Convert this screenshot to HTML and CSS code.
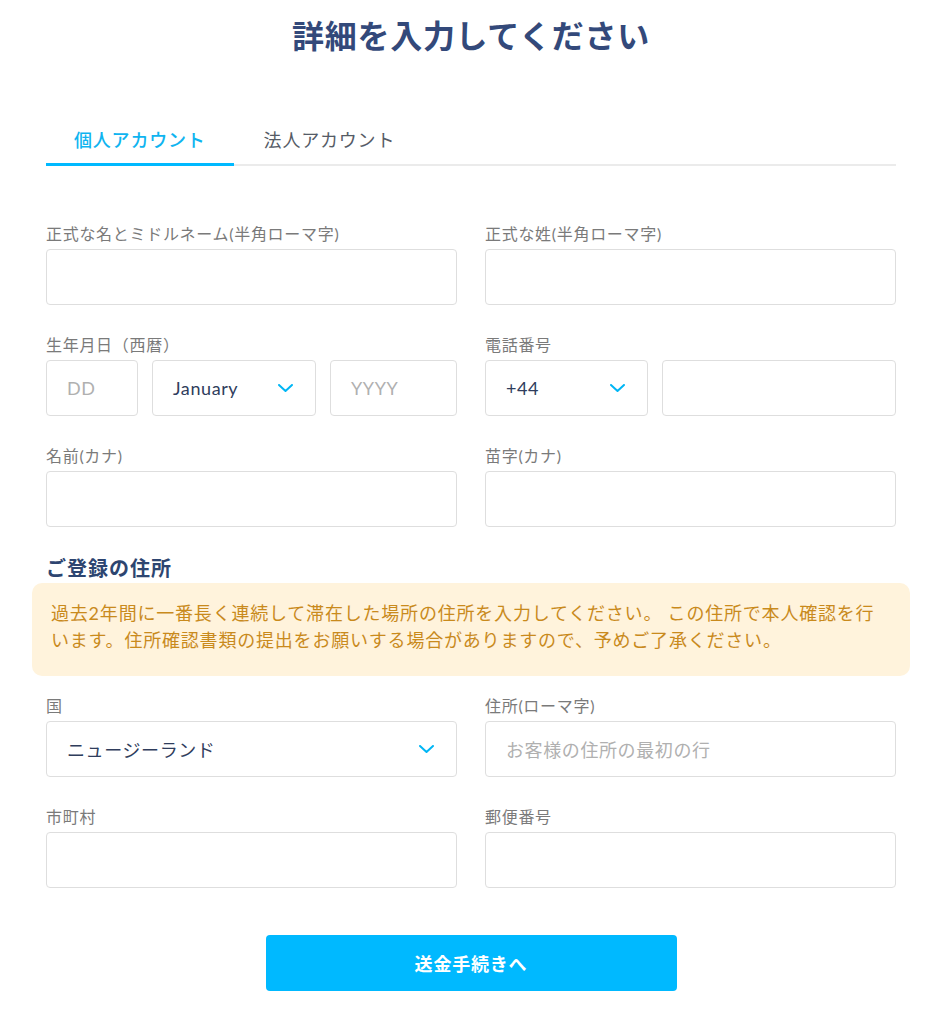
FILE: index.html
```html
<!DOCTYPE html>
<html lang="ja">
<head>
<meta charset="utf-8">
<title>詳細を入力してください</title>
<link rel="stylesheet" href="styles.css">
</head>
<body>
<main class="page">
  <h1 class="title">詳細を入力してください</h1>

  <nav class="tabs">
    <div class="tab tab-active">個人アカウント</div>
    <div class="tab">法人アカウント</div>
  </nav>

  <section class="grid first-grid">
    <div class="field">
      <label class="label">正式な名とミドルネーム(半角ローマ字)</label>
      <div class="control"></div>
    </div>
    <div class="field">
      <label class="label">正式な姓(半角ローマ字)</label>
      <div class="control"></div>
    </div>

    <div class="field">
      <label class="label">生年月日（西暦）</label>
      <div class="dob">
        <div class="control placeholder">DD</div>
        <div class="control select"><span class="value">January</span><svg class="chev" width="15" height="8" viewBox="0 0 15 8"><path d="M1 1l6.5 6L14 1" fill="none" stroke="#00b6f5" stroke-width="2" stroke-linecap="round" stroke-linejoin="round"/></svg></div>
        <div class="control placeholder">YYYY</div>
      </div>
    </div>
    <div class="field">
      <label class="label">電話番号</label>
      <div class="phone">
        <div class="control select"><span class="value">+44</span><svg class="chev" width="15" height="8" viewBox="0 0 15 8"><path d="M1 1l6.5 6L14 1" fill="none" stroke="#00b6f5" stroke-width="2" stroke-linecap="round" stroke-linejoin="round"/></svg></div>
        <div class="control"></div>
      </div>
    </div>

    <div class="field">
      <label class="label">名前(カナ)</label>
      <div class="control"></div>
    </div>
    <div class="field">
      <label class="label">苗字(カナ)</label>
      <div class="control"></div>
    </div>
  </section>

  <h2 class="section-title">ご登録の住所</h2>
  <div class="notice">過去2年間に一番長く連続して滞在した場所の住所を入力してください。 この住所で本人確認を行います。住所確認書類の提出をお願いする場合がありますので、予めご了承ください。</div>

  <section class="grid">
    <div class="field">
      <label class="label">国</label>
      <div class="control select"><span class="value">ニュージーランド</span><svg class="chev" width="15" height="8" viewBox="0 0 15 8"><path d="M1 1l6.5 6L14 1" fill="none" stroke="#00b6f5" stroke-width="2" stroke-linecap="round" stroke-linejoin="round"/></svg></div>
    </div>
    <div class="field">
      <label class="label">住所(ローマ字)</label>
      <div class="control placeholder">お客様の住所の最初の行</div>
    </div>
    <div class="field">
      <label class="label">市町村</label>
      <div class="control"></div>
    </div>
    <div class="field">
      <label class="label">郵便番号</label>
      <div class="control"></div>
    </div>
  </section>

  <div class="actions">
    <button class="submit" type="button">送金手続きへ</button>
  </div>
</main>
</body>
</html>
```

FILE: styles.css
```css
* { box-sizing: border-box; }

body {
  margin: 0;
  background: #ffffff;
  font-family: "Lato", "Noto Sans CJK JP", sans-serif;
  color: #2f3d5c;
}

.page {
  width: 850px;
  margin: 0 47px 0 46px;
  padding-top: 16px;
}

.title {
  margin: 0;
  text-align: center;
  font-size: 32px;
  line-height: 40px;
  font-weight: 700;
  letter-spacing: 0.7px;
  color: #33497a;
}

.tabs {
  display: flex;
  margin-top: 72px;
  box-shadow: inset 0 -2px 0 #ebebeb;
}

.tab {
  padding: 0 28px 11px;
  font-size: 18px;
  line-height: 24px;
  letter-spacing: 0.8px;
  color: #555b66;
  border-bottom: 3px solid transparent;
}

.tab + .tab {
  padding-left: 30px;
}

.tab-active {
  color: #0fb4f0;
  font-weight: 500;
  border-bottom-color: #00b9ff;
}

.grid {
  display: grid;
  grid-template-columns: 411px 411px;
  column-gap: 28px;
  row-gap: 29px;
}

.first-grid {
  margin-top: 57px;
}

.field {
  display: flex;
  flex-direction: column;
}

.label {
  font-size: 16px;
  line-height: 22px;
  margin-bottom: 4px;
  letter-spacing: 0.7px;
  color: #7a7a7a;
}

.control {
  height: 56px;
  border: 1px solid #dedede;
  border-radius: 4px;
  background: #fff;
  padding: 0 20px;
  display: flex;
  align-items: center;
  font-size: 18px;
  letter-spacing: 0.6px;
  color: #2f3d5c;
}

.placeholder {
  color: #b0b0b0;
}

.select {
  justify-content: space-between;
  padding-right: 22px;
}

.chev {
  flex: none;
}

.dob {
  display: grid;
  grid-template-columns: 92px 164px 127px;
  column-gap: 14px;
}

.phone {
  display: grid;
  grid-template-columns: 163px 234px;
  column-gap: 14px;
}

.section-title {
  margin: 28px 0 2px;
  font-size: 20px;
  line-height: 26px;
  font-weight: 700;
  letter-spacing: 1px;
  color: #2d4570;
}

.notice {
  margin: 0 -14px 19px;
  padding: 17px 19px 22px;
  background: #fff3dc;
  border-radius: 10px;
  font-size: 18px;
  line-height: 27px;
  letter-spacing: 0.8px;
  color: #c98a1c;
}

.actions {
  display: flex;
  justify-content: center;
  margin-top: 47px;
}

.submit {
  width: 411px;
  height: 56px;
  border: none;
  border-radius: 4px;
  background: #00b9ff;
  color: #ffffff;
  font-family: "Lato", "Noto Sans CJK JP", sans-serif;
  font-size: 18px;
  font-weight: 700;
  letter-spacing: 0.8px;
}
```
